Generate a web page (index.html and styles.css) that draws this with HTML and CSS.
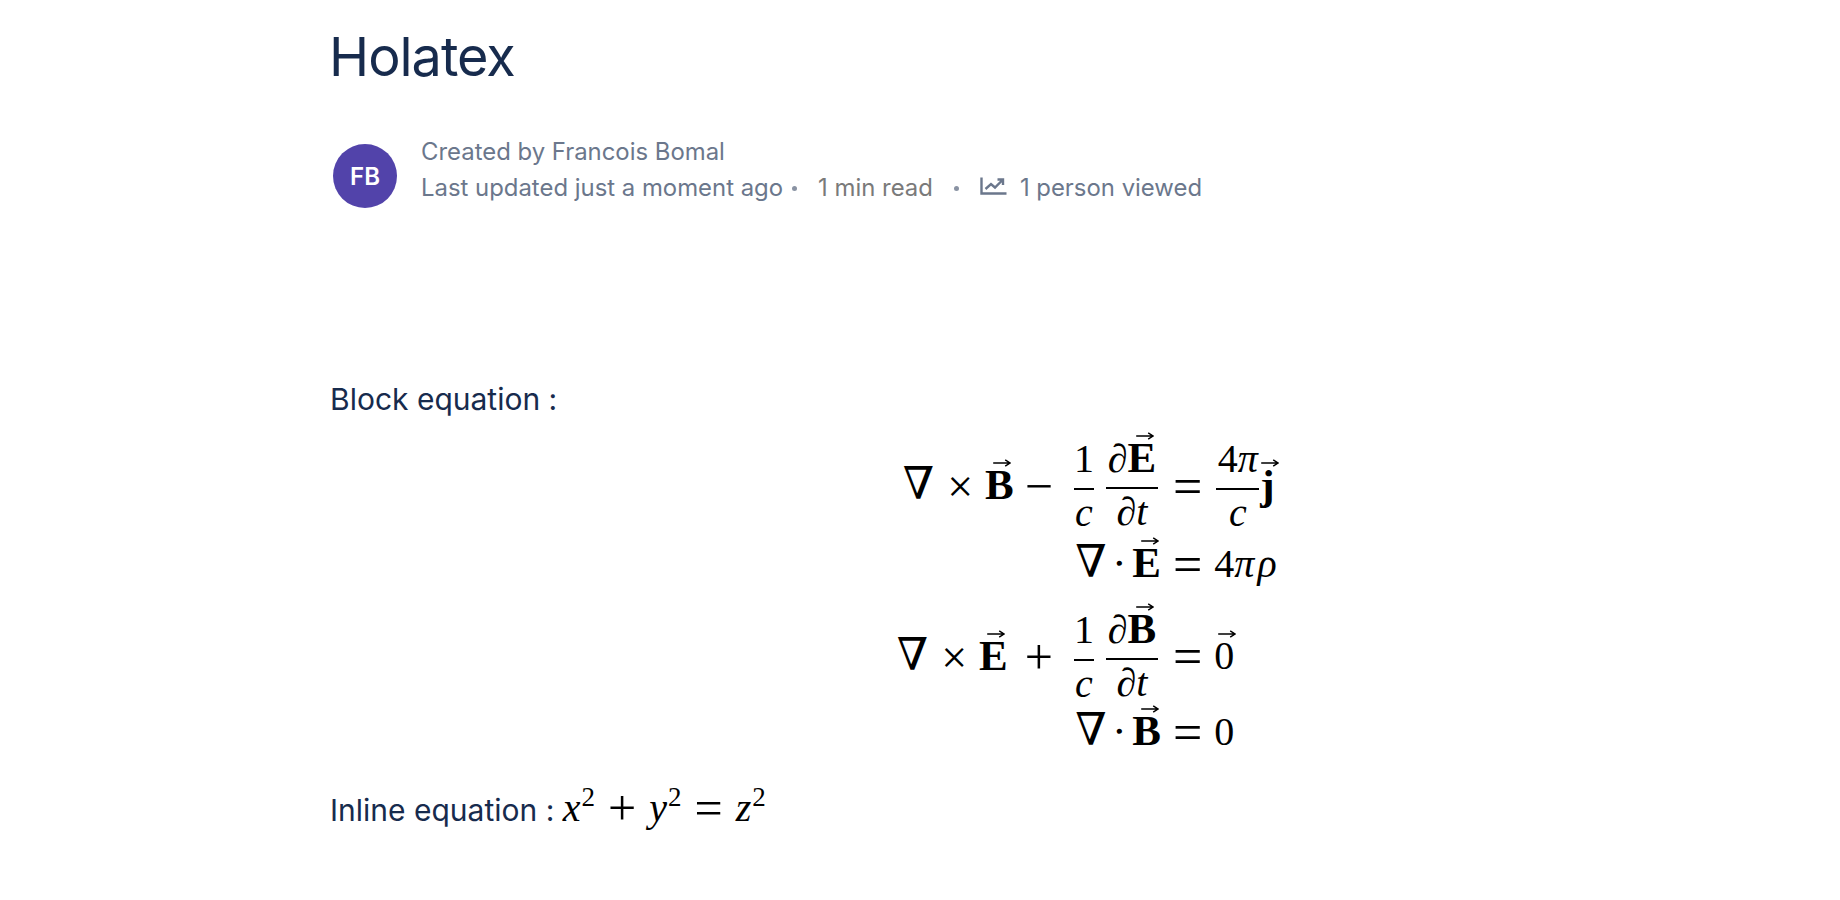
FILE: index.html
```html
<!DOCTYPE html>
<html lang="en">
<head>
<meta charset="utf-8">
<title>Holatex</title>
<link rel="stylesheet" href="styles.css">
</head>
<body>
<main class="page">
  <h1 class="title">Holatex</h1>
  <div class="byline">
    <div class="avatar">FB</div>
    <div class="meta">
      <div class="meta-line">Created by Francois Bomal</div>
      <div class="meta-line meta-second">
        <span>Last updated just a moment ago</span>
        <span class="dot dot-a"></span>
        <span class="read">1 min read</span>
        <span class="dot dot-b"></span>
        <svg class="chart" viewBox="0 0 27 18" aria-hidden="true"><path d="M1.5 0.5V16.5H26.5M5.5 12L11 7L15 10.5L22.5 3M17.5 2.5H23V8"/></svg>
        <span>1 person viewed</span>
      </div>
    </div>
  </div>
  <p class="para block-label">Block equation :</p>
  <div class="equations">
    <div class="lhs r1"><span class="op">∇</span><span class="bin times">×</span><span class="vec b">B<svg viewBox="0 0 22 10"><path d="M0 5H20M15 1L21 5L15 9"/></svg></span><span class="bin minus">−</span><span class="frac f1"><span class="num">1</span><span class="den"><i>c</i></span></span><span class="frac f2"><span class="num">∂<span class="vec b">E<svg viewBox="0 0 22 10"><path d="M0 5H20M15 1L21 5L15 9"/></svg></span></span><span class="den">∂<i>t</i></span></span></div>
    <div class="rhs r1"><span class="eq">=</span><span class="frac f3"><span class="num">4<i>π</i></span><span class="den"><i>c</i></span></span><span class="vec b j">j<svg viewBox="0 0 22 10"><path d="M0 5H20M15 1L21 5L15 9"/></svg></span></div>
    <div class="lhs r2"><span class="op">∇</span><span class="cdot">⋅</span><span class="vec b tail">E<svg viewBox="0 0 22 10"><path d="M0 5H20M15 1L21 5L15 9"/></svg></span></div>
    <div class="rhs r2"><span class="eq">=</span>4<i>π</i><i class="rho">ρ</i></div>
    <div class="lhs r3"><span class="op">∇</span><span class="bin times">×</span><span class="vec b">E<svg viewBox="0 0 22 10"><path d="M0 5H20M15 1L21 5L15 9"/></svg></span><span class="bin plus">+</span><span class="frac f1"><span class="num">1</span><span class="den"><i>c</i></span></span><span class="frac f2"><span class="num">∂<span class="vec b">B<svg viewBox="0 0 22 10"><path d="M0 5H20M15 1L21 5L15 9"/></svg></span></span><span class="den">∂<i>t</i></span></span></div>
    <div class="rhs r3"><span class="eq">=</span><span class="vec">0<svg viewBox="0 0 22 10"><path d="M0 5H20M15 1L21 5L15 9"/></svg></span></div>
    <div class="lhs r4"><span class="op">∇</span><span class="cdot">⋅</span><span class="vec b tail">B<svg viewBox="0 0 22 10"><path d="M0 5H20M15 1L21 5L15 9"/></svg></span></div>
    <div class="rhs r4"><span class="eq">=</span>0</div>
  </div>
  <p class="para inline-label">Inline equation : <span class="imath"><i>x</i><sup>2</sup><span class="ibin">+</span><i>y</i><sup>2</sup><span class="ibin">=</span><i>z</i><sup>2</sup></span></p>
</main>
</body>
</html>
```
FILE: styles.css
```css
* { box-sizing: border-box; }
html, body { margin: 0; padding: 0; background: #fff; }
body { font-family: Inter, "Liberation Sans", sans-serif; color: #172b4d; }
.page { padding: 0 0 0 330px; height: 900px; overflow: hidden; }
.title { margin: 0 0 0 -1px; padding-top: 21px; font-size: 54px; line-height: 72px; font-weight: 400; letter-spacing: -1px; }
.byline { display: flex; align-items: flex-start; margin: 51px 0 0 3px; gap: 24px; }
.avatar { width: 64px; height: 64px; border-radius: 50%; background: #5243aa; color: #fff; font-size: 24px; font-weight: 600; display: flex; align-items: center; justify-content: center; }
.meta { color: #6b778c; font-size: 23.9px; margin-top: -10px; }
.meta-line { line-height: 36px; white-space: nowrap; }
.meta-second { display: flex; align-items: center; }
.dot { width: 5px; height: 5px; border-radius: 50%; background: #8a93a3; }
.dot-a { margin: 0 21px 0 9px; }
.dot-b { margin: 0 21px; }
.read { color: #7a7a7a; }
.chart { width: 27px; height: 18px; margin: -4px 13px 0 0; fill: none; stroke: #6b778c; stroke-width: 2.4; }
.para { margin: 0; font-size: 30px; line-height: 40px; white-space: nowrap; }
.block-label { margin-top: 171px; }
.equations { display: grid; grid-template-columns: 280px auto; width: max-content; margin: 19px 0 0 563px; font-family: "Liberation Serif", "DejaVu Serif", serif; font-size: 40px; color: #000; white-space: nowrap; }
.lhs { text-align: right; }
.r1 { height: 96px; line-height: 96px; }
.r2 { height: 60px; line-height: 60px; }
.r3 { height: 109px; padding-top: 15px; line-height: 94px; }
.r4 { height: 58px; line-height: 58px; }
.op { font-family: "DejaVu Serif", serif; font-size: 45px; line-height: 1; }
.bin { font-size: 50px; line-height: 1; vertical-align: -4px; }
.times { font-size: 46px; vertical-align: -3px; margin: 0 12px 0 13px; }
.minus { margin-left: 11px; }
.plus { margin-left: 17px; }
.cdot { margin: 0 6px; }
.tail { margin-right: 12px; }
.eq { font-size: 52px; line-height: 1; vertical-align: -5px; margin-right: 12px; }
.b { font-weight: 700; font-size: 43px; }
.vec { position: relative; display: inline-block; line-height: 40px; }
.vec svg { position: absolute; left: 50%; top: -6.5px; width: 18px; height: 8px; margin-left: -6px; fill: none; stroke: #000; stroke-width: 1.8; }
.frac { display: inline-flex; flex-direction: column; align-items: stretch; text-align: center; vertical-align: 27px; line-height: 40px; }
.num { height: 51px; line-height: 40px; padding-bottom: 9px; border-bottom: 2px solid #000; }
.den { height: 42px; line-height: 45px; }
.f1 { width: 20px; margin: 0 12px 0 21px; }
.f2 { width: 52px; margin-right: 15px; }
.f3 { width: 43px; margin: 0 1px 0 2px; }
.rho { margin-left: 3px; }
.imath { font-family: "Liberation Serif", serif; font-size: 40px; color: #000; }
.imath sup { font-size: 27px; line-height: 0; vertical-align: 15px; margin-left: 1px; }
.ibin { font-size: 50px; line-height: 0; vertical-align: -4px; margin: 0 13px; }
.inline-label { margin-top: 27px; }
```
